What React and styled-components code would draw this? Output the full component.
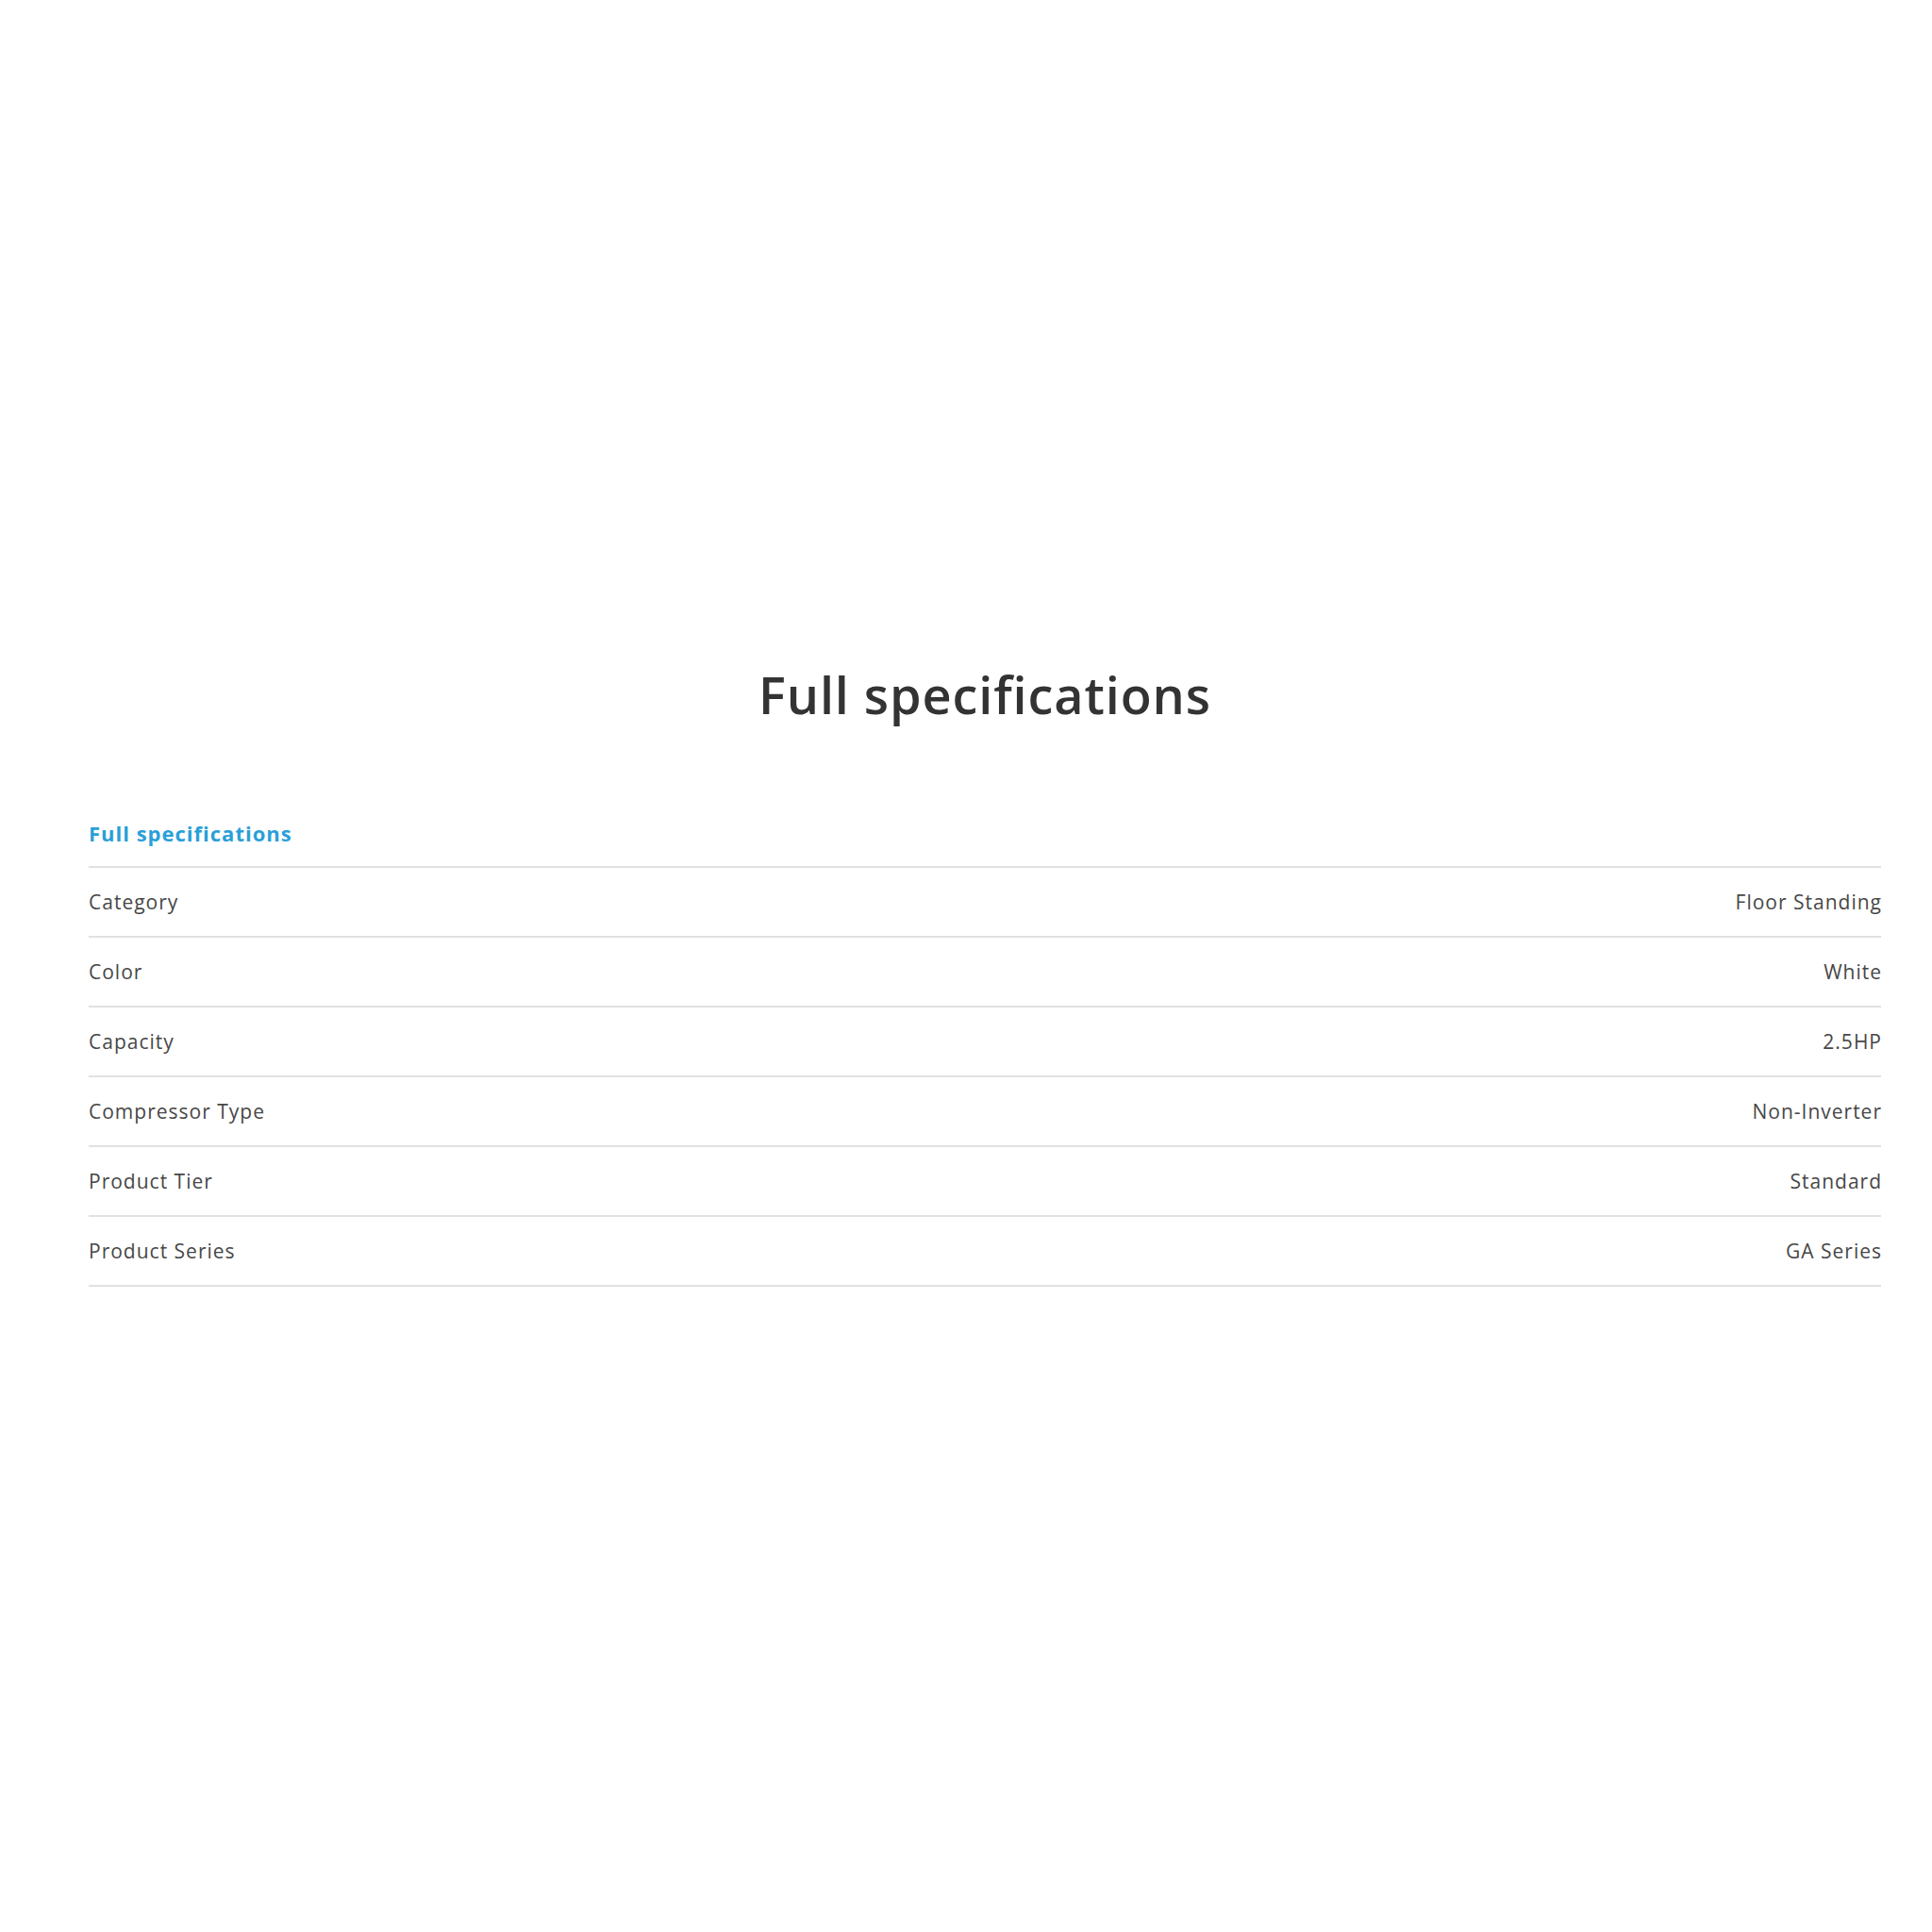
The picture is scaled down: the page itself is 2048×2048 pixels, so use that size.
import React from "react";
import styled, { createGlobalStyle } from "styled-components";

const GlobalStyle = createGlobalStyle`
  body {
    margin: 0;
    background: #fff;
    font-family: "Open Sans", Lato, sans-serif;
    font-variant-ligatures: none;
  }
`;

const Page = styled.main`
  min-height: 2048px;
  padding: 696px 54px 0 94px;
  box-sizing: border-box;
`;

const Title = styled.h2`
  margin: 0;
  text-align: center;
  font-size: 54px;
  line-height: 80px;
  font-weight: 600;
  letter-spacing: 0.9px;
  color: #333;
`;

const Section = styled.section`
  margin-top: 92px;
`;

const SectionHead = styled.h3`
  margin: 0;
  padding-bottom: 20px;
  font-size: 22px;
  line-height: 30px;
  font-weight: 700;
  letter-spacing: 1px;
  color: #2a9fd8;
  border-bottom: 2px solid #e1e1e1;
`;

const Row = styled.div`
  display: flex;
  justify-content: space-between;
  align-items: center;
  height: 72px;
  border-bottom: 2px solid #e1e1e1;
  font-size: 21px;
  letter-spacing: 1px;
  color: #474747;
`;

const Value = styled.span`
  margin-right: -1px;
`;

const specs = [
  ["Category", "Floor Standing"],
  ["Color", "White"],
  ["Capacity", "2.5HP"],
  ["Compressor Type", "Non-Inverter"],
  ["Product Tier", "Standard"],
  ["Product Series", "GA Series"],
];

const App = () => (
  <>
    <GlobalStyle />
    <Page>
      <Title>Full specifications</Title>
      <Section>
        <SectionHead>Full specifications</SectionHead>
        {specs.map(([label, value]) => (
          <Row key={label}>
            <span>{label}</span>
            <Value>{value}</Value>
          </Row>
        ))}
      </Section>
    </Page>
  </>
);

export default App;
